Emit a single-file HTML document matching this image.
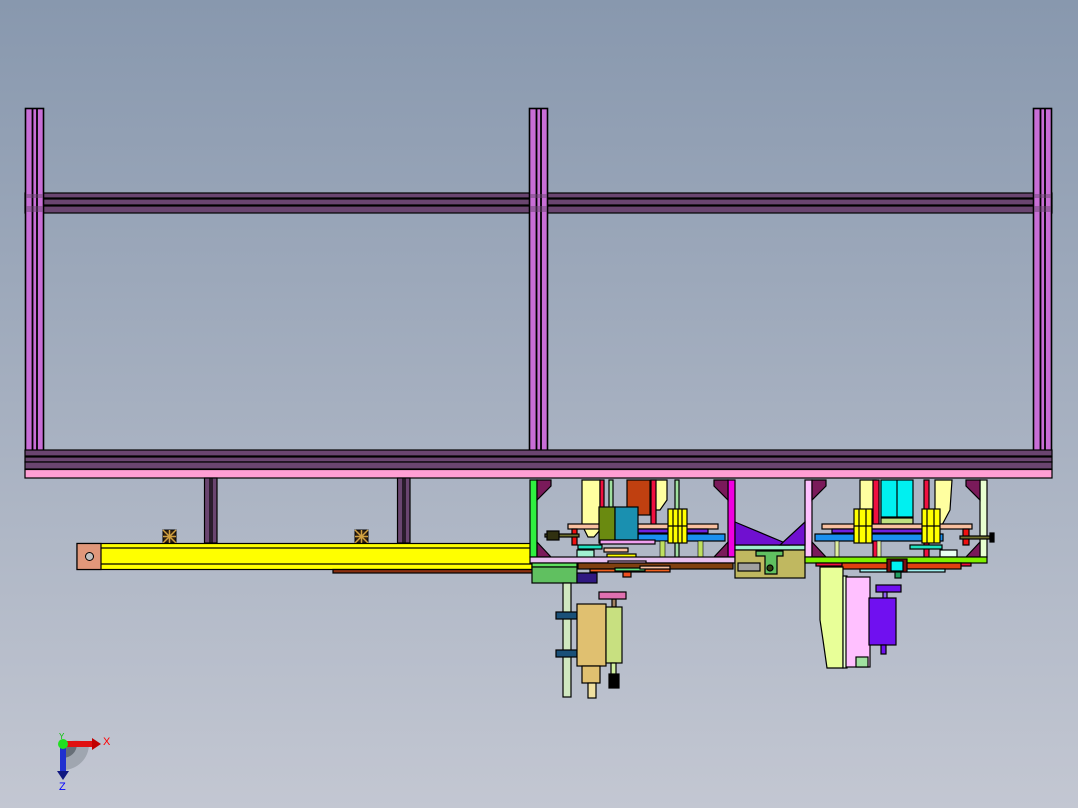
<!DOCTYPE html>
<html><head><meta charset="utf-8"><style>
html,body{margin:0;padding:0;width:1078px;height:808px;overflow:hidden}
body{background:linear-gradient(#8898ae,#c3c7d2)}
svg{display:block}
</style></head><body>
<svg width="1078" height="808" viewBox="0 0 1078 808" xmlns="http://www.w3.org/2000/svg" font-family="Liberation Sans, sans-serif">
<g stroke="#000" stroke-width="1.2">
<!-- top beams -->
<rect x="25" y="193" width="1027" height="5" fill="#6a4570"/>
<rect x="25" y="199" width="1027" height="6" fill="#6a4570"/>
<rect x="25" y="206" width="1027" height="7" fill="#6a4570"/>
<!-- posts -->
<g id="post">
<rect x="25.5" y="108.5" width="18" height="344" fill="#c86ed6" stroke-width="1.6"/>
<line x1="32.5" y1="108" x2="32.5" y2="452" stroke-width="1.8"/>
<line x1="37" y1="108" x2="37" y2="452" stroke-width="1.8"/>
</g>
<use href="#post" x="504"/>
<use href="#post" x="1008"/>
<!-- beam overlay on posts -->
<rect x="26" y="194" width="17" height="4" fill="#6a4570" stroke="none" opacity="0.5"/>
<rect x="26" y="206" width="17" height="6" fill="#6a4570" stroke="none" opacity="0.5"/>
<rect x="530" y="194" width="17" height="4" fill="#6a4570" stroke="none" opacity="0.5"/>
<rect x="530" y="206" width="17" height="6" fill="#6a4570" stroke="none" opacity="0.5"/>
<rect x="1034" y="194" width="17" height="4" fill="#6a4570" stroke="none" opacity="0.5"/>
<rect x="1034" y="206" width="17" height="6" fill="#6a4570" stroke="none" opacity="0.5"/>
<!-- bottom beams -->
<rect x="25" y="450" width="1027" height="6" fill="#6a4570"/>
<rect x="25" y="457" width="1027" height="5" fill="#6a4570"/>
<rect x="25" y="462" width="1027" height="7" fill="#6a4570"/>
<rect x="25" y="469.5" width="1027" height="8.5" fill="#ff9fd4"/>
<!-- small posts -->
<rect x="204.5" y="478" width="12.5" height="65" fill="#6a4570"/>
<line x1="210" y1="478" x2="210" y2="543"/><line x1="212" y1="478" x2="212" y2="543"/>
<rect x="397.5" y="478" width="12.5" height="65" fill="#6a4570"/>
<line x1="403" y1="478" x2="403" y2="543"/><line x1="405" y1="478" x2="405" y2="543"/>
<!-- X marks -->
<g stroke-width="1">
<rect x="163" y="530" width="13" height="13" fill="#302010"/>
<path d="M163 530L176 543M176 530L163 543M169.5 530V543M163 536.5H176" stroke="#d0a040" stroke-width="1.5"/>
<rect x="355" y="530" width="13" height="13" fill="#302010"/>
<path d="M355 530L368 543M368 530L355 543M361.5 530V543M355 536.5H368" stroke="#d0a040" stroke-width="1.5"/>
</g>
<!-- yellow bar -->
<rect x="77" y="543.5" width="455" height="26" fill="#ffff00"/>
<line x1="101" y1="548" x2="532" y2="548"/>
<line x1="101" y1="564" x2="532" y2="564"/>
<rect x="77" y="543.5" width="24" height="26" fill="#e0977a"/>
<circle cx="89.5" cy="556.5" r="4" fill="#c0c0c0" stroke-width="1"/>
<rect x="333" y="569.5" width="200" height="3.5" fill="#8a3010"/>

<!-- LEFT MACHINE -->
<rect x="530" y="480" width="7" height="77" fill="#30f040"/>
<rect x="728" y="480" width="7" height="77" fill="#f000e0"/>
<path d="M537 480L551 480L551 486L537 500Z" fill="#7a1a5a"/>
<path d="M728 480L714 480L714 486L728 500Z" fill="#7a1a5a"/>
<path d="M537 542L551 557L537 557Z" fill="#7a1a5a"/>
<path d="M728 542L714 557L728 557Z" fill="#7a1a5a"/>
<path d="M582 480L600 480L600 530L594 537L588 537L582 525Z" fill="#ffffa0"/>
<path d="M651 480L667 480L667 500L660 510L651 510Z" fill="#ffffa0"/>
<rect x="627" y="480" width="23" height="35" fill="#c04010"/>
<rect x="651" y="480" width="5" height="60" fill="#f01040"/>
<rect x="600" y="480" width="4" height="30" fill="#f01040"/>
<rect x="609" y="480" width="4" height="40" fill="#a0e0a0"/>
<rect x="675" y="480" width="4" height="78" fill="#a0e0a0"/>
<rect x="568" y="524" width="150" height="5" fill="#f8c0a0"/>
<rect x="638" y="534" width="87" height="7" fill="#1a90f0"/>
<rect x="638" y="529" width="70" height="4" fill="#7020e0"/>
<rect x="599" y="507" width="16" height="36" fill="#6a8a10"/>
<rect x="615" y="507" width="23" height="33" fill="#1a90b0"/>
<rect x="668" y="509" width="19" height="34" fill="#ffff00"/>
<line x1="668" y1="526" x2="687" y2="526"/>
<line x1="673" y1="509" x2="673" y2="543"/><line x1="678" y1="509" x2="678" y2="543"/><line x1="682" y1="509" x2="682" y2="543"/>
<rect x="600" y="540" width="55" height="4" fill="#f0a0f0"/>
<rect x="660" y="541" width="5" height="16" fill="#c0e060" stroke-width="0.6"/>
<rect x="698" y="541" width="5" height="16" fill="#c0e060" stroke-width="0.6"/>
<rect x="572" y="529" width="5" height="16" fill="#f01010"/>
<rect x="545" y="534" width="34" height="3" fill="#707030"/>
<rect x="547" y="531" width="12" height="9" fill="#303010"/>
<rect x="578" y="545" width="24" height="4" fill="#20e0c0"/>
<rect x="577" y="550" width="17" height="11" fill="#a0f0d0"/>
<rect x="604" y="548" width="24" height="4" fill="#f8c0a0"/>
<rect x="607" y="554" width="29" height="7" fill="#ffff00"/>
<rect x="530" y="557" width="205" height="6" fill="#e8c0f0"/>
<rect x="608" y="561" width="38" height="4" fill="#f8c0f0"/>
<rect x="578" y="563" width="155" height="6" fill="#804010"/>
<rect x="590" y="569" width="80" height="3" fill="#f06020"/>
<rect x="615" y="568" width="30" height="3" fill="#60e080"/>
<rect x="623" y="572" width="8" height="5" fill="#f05020"/>
<rect x="532" y="563" width="45" height="4" fill="#60e060"/>
<rect x="532" y="567" width="45" height="16" fill="#60c060"/>
<rect x="577" y="573" width="20" height="10" fill="#301880"/>
<rect x="735" y="545" width="70" height="5" fill="#a0f0d0"/>
<rect x="735" y="550" width="70" height="28" fill="#c0b860"/>
<path d="M756 551L783 551L783 556L777 556L777 574L765 574L765 556L756 556Z" fill="#60c060"/>
<circle cx="770" cy="568" r="3" fill="#304010"/>
<rect x="738" y="563" width="22" height="8" fill="#a0a0a0"/>
<rect x="640" y="566" width="30" height="3" fill="#f8c0a0"/>
<rect x="563" y="583" width="8" height="114" fill="#d0e8c0"/>
<rect x="556" y="612" width="21" height="7" fill="#1a5078"/>
<rect x="556" y="650" width="21" height="7" fill="#1a5078"/>
<rect x="612" y="599" width="4" height="8" fill="#a08060"/>
<rect x="599" y="592" width="27" height="7" fill="#e070b0"/>
<rect x="577" y="604" width="29" height="62" fill="#e0c070"/>
<rect x="606" y="607" width="16" height="56" fill="#c8e080"/>
<rect x="582" y="666" width="18" height="17" fill="#e0c070"/>
<rect x="588" y="683" width="8" height="15" fill="#f0e0a0"/>
<rect x="611" y="663" width="5" height="12" fill="#d0f0a0"/>
<rect x="609" y="674" width="10" height="14" fill="#000"/>

<!-- RIGHT MACHINE -->
<rect x="805" y="480" width="7" height="77" fill="#ffc0ff"/>
<rect x="980" y="480" width="7" height="77" fill="#e8ffd0"/>
<path d="M812 480L826 480L826 486L812 500Z" fill="#7a1a5a"/>
<path d="M980 480L966 480L966 486L980 500Z" fill="#7a1a5a"/>
<path d="M812 542L826 557L812 557Z" fill="#7a1a5a"/>
<path d="M980 542L966 557L980 557Z" fill="#7a1a5a"/>
<path d="M735 522L790 545L735 545Z" fill="#7010d0"/>
<path d="M805 522L780 545L805 545Z" fill="#7010d0"/>
<path d="M860 480L876 480L876 520L866 530L860 530Z" fill="#ffffa0"/>
<path d="M935 480L952 480L950 510L942 525L935 525Z" fill="#ffffa0"/>
<rect x="873" y="480" width="6" height="78" fill="#f01040"/>
<rect x="924" y="480" width="5" height="78" fill="#f01040"/>
<rect x="881" y="480" width="32" height="37" fill="#00f0f0"/>
<line x1="897" y1="480" x2="897" y2="517"/>
<rect x="881" y="518" width="32" height="6" fill="#c0e080"/>
<rect x="822" y="524" width="150" height="5" fill="#f8c0a0"/>
<rect x="832" y="529" width="100" height="4" fill="#7020e0"/>
<rect x="815" y="534" width="128" height="7" fill="#1a90f0"/>
<rect x="854" y="509" width="18" height="34" fill="#ffff00"/>
<rect x="922" y="509" width="18" height="34" fill="#ffff00"/>
<line x1="854" y1="526" x2="872" y2="526"/><line x1="922" y1="526" x2="940" y2="526"/>
<line x1="859" y1="509" x2="859" y2="543"/><line x1="866" y1="509" x2="866" y2="543"/>
<line x1="927" y1="509" x2="927" y2="543"/><line x1="934" y1="509" x2="934" y2="543"/>
<rect x="963" y="529" width="6" height="16" fill="#f01010"/>
<rect x="960" y="536" width="30" height="3" fill="#707030"/>
<rect x="990" y="533" width="4" height="9" fill="#000"/>
<rect x="910" y="545" width="32" height="4" fill="#20e0c0"/>
<rect x="940" y="550" width="17" height="7" fill="#e8fff0"/>
<rect x="835" y="541" width="4" height="16" fill="#e0f0a0" stroke-width="0.6"/>
<rect x="877" y="541" width="4" height="16" fill="#e0f0a0" stroke-width="0.6"/>
<rect x="805" y="557" width="182" height="6" fill="#80f000"/>
<rect x="816" y="563" width="155" height="3" fill="#f01040"/>
<rect x="842" y="563" width="119" height="6" fill="#e04010"/>
<rect x="860" y="569" width="85" height="3" fill="#a0f0f0"/>
<rect x="887" y="559" width="20" height="13" fill="#7a1010"/>
<rect x="891" y="561" width="12" height="10" fill="#00f0f0"/>
<rect x="895" y="572" width="6" height="6" fill="#20a060"/>
<path d="M820 567L843 567L843 668L827 668L823 640L820 620Z" fill="#e8ff98"/>
<rect x="843" y="576" width="4" height="92" fill="#e8ffd0"/>
<rect x="846" y="577" width="24" height="90" fill="#ffc0ff"/>
<rect x="856" y="657" width="12" height="10" fill="#a0e0a0"/>
<rect x="876" y="585" width="25" height="7" fill="#7010f0"/>
<rect x="883" y="592" width="4" height="7" fill="#9060f0"/>
<rect x="869" y="598" width="27" height="47" fill="#7010f0"/>
<rect x="881" y="645" width="5" height="9" fill="#7010f0"/>
</g>

<!-- triad -->
<path d="M63 744 A26 26 0 0 1 89 744 L89 744 A26 26 0 0 1 63 770 Z" fill="#808890" opacity="0.5"/>
<path d="M63 744L63 758A14 14 0 0 0 77 744Z" fill="#505860" opacity="0.7"/>
<rect x="63" y="741" width="30" height="6" fill="#e01010"/>
<path d="M92 738L101 744L92 750Z" fill="#c00000"/>
<rect x="60" y="744" width="6" height="28" fill="#2030d0"/>
<path d="M57 771L69 771L63 780Z" fill="#101880"/>
<circle cx="63" cy="744" r="5" fill="#20e020"/>
<text x="103" y="745" font-size="11" fill="#ff0000">X</text>
<text x="59" y="790" font-size="11" fill="#0000ff">Z</text>
<text x="59" y="739" font-size="8" fill="#00c000">Y</text>
</svg>
</body></html>
